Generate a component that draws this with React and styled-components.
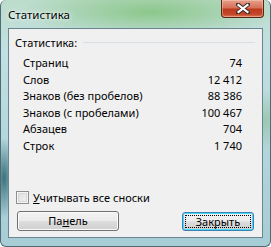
import React from 'react';
import styled, { createGlobalStyle } from 'styled-components';

const GlobalStyle = createGlobalStyle`
  html, body {
    margin: 0;
    padding: 0;
    background: #ffffff;
  }
  body {
    font-family: "Noto Sans", "DejaVu Sans", sans-serif;
    font-size: 11px;
    color: #000;
  }
`;

const Window = styled.div`
  width: 271px;
  height: 247px;
  box-sizing: border-box;
  display: flex;
  flex-direction: column;
  padding: 0 7px 8px 7px;
  border-radius: 6px;
  border: 1px solid #4f6a74;
  border-top: none;
  background:
    radial-gradient(ellipse 12px 40px at 3px 178px, rgba(30, 90, 100, 0.8), rgba(30, 90, 100, 0) 100%),
    radial-gradient(ellipse 130px 26px at 150px 12px, rgba(120, 190, 110, 0.7), rgba(120, 190, 110, 0) 100%),
    radial-gradient(ellipse 40px 30px at 262px 120px, rgba(120, 180, 120, 0.45), rgba(120, 180, 120, 0) 100%),
    linear-gradient(180deg, #bcdccb 0%, #c2e0e2 20%, #b2d6dc 60%, #a6ccd5 100%);
`;

const TitleBar = styled.div`
  height: 28px;
  display: flex;
  align-items: flex-start;
  justify-content: space-between;
`;

const Title = styled.span`
  margin-top: 7px;
  line-height: 16px;
  font-size: 11.5px;
  color: #000;
  text-shadow: 0 0 6px rgba(255, 255, 255, 0.9), 0 0 3px rgba(255, 255, 255, 0.9);
`;

const CloseButton = styled.div`
  width: 43px;
  height: 18px;
  box-sizing: border-box;
  margin-right: -1px;
  border: 1px solid #5a2418;
  border-top: none;
  border-radius: 0 0 4px 4px;
  display: flex;
  align-items: center;
  justify-content: center;
  background: linear-gradient(180deg, #e6a08c 0%, #d7715a 45%, #bb3a1c 55%, #c4482a 85%, #dc7f55 100%);
  box-shadow: inset 0 0 0 1px rgba(255, 220, 200, 0.4);
`;

const Client = styled.div`
  flex: 1;
  display: flex;
  flex-direction: column;
  background: #f0f0f0;
  border: 1px solid #6b8590;
  padding: 0 7px 6px 6px;
`;

const GroupHeader = styled.div`
  margin-top: 6px;
  height: 16px;
  display: flex;
  align-items: center;
  gap: 6px;
`;

const HeaderText = styled.span`
  line-height: 16px;
`;

const HeaderLine = styled.div`
  flex: 1;
  height: 1px;
  margin-top: -1px;
  background: #d5dfe5;
`;

const StatsGrid = styled.div`
  margin-top: 4px;
  padding: 0 13px 0 8px;
  display: grid;
  grid-template-columns: 1fr auto;
  grid-auto-rows: 16.5px;
  align-items: center;
`;

const Label = styled.span`
  line-height: 16px;
`;

const Value = styled.span`
  line-height: 16px;
  text-align: right;
`;

const CheckRow = styled.label`
  margin-top: auto;
  margin-left: 1px;
  height: 15px;
  display: flex;
  align-items: center;
  gap: 4px;
`;

const CheckBox = styled.span`
  width: 13px;
  height: 13px;
  box-sizing: border-box;
  border: 1px solid #8e8f8f;
  background: linear-gradient(135deg, #dcdcdc 0%, #f4f4f4 100%);
  box-shadow: inset 0 0 0 1px #f5f5f5, inset 0 0 0 2px #d6d6d6;
`;

const Accel = styled.span`
  text-decoration: underline;
`;

const ButtonRow = styled.div`
  margin-top: 6px;
  padding: 0 1px 0 2px;
  display: flex;
  justify-content: space-between;
  align-items: flex-end;
`;

const Button = styled.div`
  width: ${(p) => p.$w}px;
  height: ${(p) => p.$h}px;
  box-sizing: border-box;
  border: 1px solid ${(p) => (p.$default ? '#3c7fb1' : '#707070')};
  border-radius: 3px;
  display: flex;
  align-items: center;
  justify-content: center;
  background: linear-gradient(180deg, #f2f2f2 0%, #ebebeb 48%, #dddddd 52%, #cfcfcf 100%);
  box-shadow: inset 0 0 0 1px ${(p) => (p.$default ? '#48d8fb' : '#fbfbfb')};
  position: relative;
`;

const FocusRect = styled.span`
  position: absolute;
  inset: 2px;
  border: 1px dotted #000;
`;

const ButtonText = styled.span`
  line-height: 16px;
  position: relative;
`;

const stats = [
  ['Страниц', '74'],
  ['Слов', '12 412'],
  ['Знаков (без пробелов)', '88 386'],
  ['Знаков (с пробелами)', '100 467'],
  ['Абзацев', '704'],
  ['Строк', '1 740'],
];

const CloseIcon = () => (
  <svg width="14" height="11" viewBox="0 0 14 11">
    <path d="M2 1.5 L12 9.5 M12 1.5 L2 9.5" stroke="#3a2a28" strokeWidth="4" strokeLinecap="round" />
    <path d="M2.5 2 L11.5 9 M11.5 2 L2.5 9" stroke="#ffffff" strokeWidth="2.2" strokeLinecap="square" />
  </svg>
);

const App = () => {
  return (
    <>
      <GlobalStyle />
      <Window>
        <TitleBar>
          <Title>Статистика</Title>
          <CloseButton>
            <CloseIcon />
          </CloseButton>
        </TitleBar>
        <Client>
          <GroupHeader>
            <HeaderText>Статистика:</HeaderText>
            <HeaderLine />
          </GroupHeader>
          <StatsGrid>
            {stats.map(([label, value]) => (
              <React.Fragment key={label}>
                <Label>{label}</Label>
                <Value>{value}</Value>
              </React.Fragment>
            ))}
          </StatsGrid>
          <CheckRow>
            <CheckBox />
            <span>
              <Accel>У</Accel>читывать все сноски
            </span>
          </CheckRow>
          <ButtonRow>
            <Button $w={102} $h={20}>
              <ButtonText>
                Па<Accel>н</Accel>ель
              </ButtonText>
            </Button>
            <Button $w={72} $h={19} $default>
              <FocusRect />
              <ButtonText>Закрыть</ButtonText>
            </Button>
          </ButtonRow>
        </Client>
      </Window>
    </>
  );
};

export default App;
